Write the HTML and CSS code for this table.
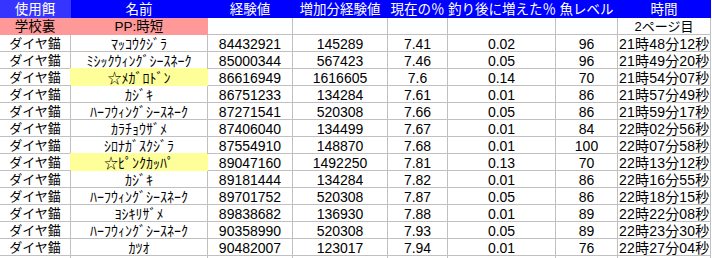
FILE: index.html
```html
<!DOCTYPE html>
<html lang="ja">
<head>
<meta charset="utf-8">
<title>釣りログ</title>
<link rel="stylesheet" href="styles.css">
</head>
<body>
<div class="sheet">
  <div class="c h first">使用餌</div>
  <div class="c h">名前</div>
  <div class="c h">経験値</div>
  <div class="c h">増加分経験値</div>
  <div class="c h">現在の％</div>
  <div class="c h">釣り後に増えた％</div>
  <div class="c h">魚レベル</div>
  <div class="c h">時間</div>

  <div class="c jp pink first-pink">学校裏</div>
  <div class="c jp pink">PP:時短</div>
  <div class="c"></div>
  <div class="c"></div>
  <div class="c"></div>
  <div class="c"></div>
  <div class="c"></div>
  <div class="c jp">2ページ目</div>

  <div class="c jp">ダイヤ錨</div><div class="c kana">ﾏｯｺｳｸｼﾞﾗ</div><div class="c">84432921</div><div class="c">145289</div><div class="c">7.41</div><div class="c">0.02</div><div class="c">96</div><div class="c t">21時48分12秒</div>
  <div class="c jp">ダイヤ錨</div><div class="c kana">ﾐｼｯｸｳｨﾝｸﾞｼｰｽﾈｰｸ</div><div class="c">85000344</div><div class="c">567423</div><div class="c">7.46</div><div class="c">0.05</div><div class="c">96</div><div class="c t">21時49分20秒</div>
  <div class="c jp">ダイヤ錨</div><div class="c kana yellow">☆ﾒｶﾞﾛﾄﾞﾝ</div><div class="c">86616949</div><div class="c">1616605</div><div class="c">7.6</div><div class="c">0.14</div><div class="c">70</div><div class="c t">21時54分07秒</div>
  <div class="c jp">ダイヤ錨</div><div class="c kana">ｶｼﾞｷ</div><div class="c">86751233</div><div class="c">134284</div><div class="c">7.61</div><div class="c">0.01</div><div class="c">86</div><div class="c t">21時57分49秒</div>
  <div class="c jp">ダイヤ錨</div><div class="c kana">ﾊｰﾌｳｨﾝｸﾞｼｰｽﾈｰｸ</div><div class="c">87271541</div><div class="c">520308</div><div class="c">7.66</div><div class="c">0.05</div><div class="c">86</div><div class="c t">21時59分17秒</div>
  <div class="c jp">ダイヤ錨</div><div class="c kana">ｶﾗﾁｮｳｻﾞﾒ</div><div class="c">87406040</div><div class="c">134499</div><div class="c">7.67</div><div class="c">0.01</div><div class="c">84</div><div class="c t">22時02分56秒</div>
  <div class="c jp">ダイヤ錨</div><div class="c kana">ｼﾛﾅｶﾞｽｸｼﾞﾗ</div><div class="c">87554910</div><div class="c">148870</div><div class="c">7.68</div><div class="c">0.01</div><div class="c">100</div><div class="c t">22時07分58秒</div>
  <div class="c jp">ダイヤ錨</div><div class="c kana yellow">☆ﾋﾟﾝｸｶｯﾊﾟ</div><div class="c">89047160</div><div class="c">1492250</div><div class="c">7.81</div><div class="c">0.13</div><div class="c">70</div><div class="c t">22時13分12秒</div>
  <div class="c jp">ダイヤ錨</div><div class="c kana">ｶｼﾞｷ</div><div class="c">89181444</div><div class="c">134284</div><div class="c">7.82</div><div class="c">0.01</div><div class="c">86</div><div class="c t">22時16分55秒</div>
  <div class="c jp">ダイヤ錨</div><div class="c kana">ﾊｰﾌｳｨﾝｸﾞｼｰｽﾈｰｸ</div><div class="c">89701752</div><div class="c">520308</div><div class="c">7.87</div><div class="c">0.05</div><div class="c">86</div><div class="c t">22時18分15秒</div>
  <div class="c jp">ダイヤ錨</div><div class="c kana">ﾖｼｷﾘｻﾞﾒ</div><div class="c">89838682</div><div class="c">136930</div><div class="c">7.88</div><div class="c">0.01</div><div class="c">89</div><div class="c t">22時22分08秒</div>
  <div class="c jp">ダイヤ錨</div><div class="c kana">ﾊｰﾌｳｨﾝｸﾞｼｰｽﾈｰｸ</div><div class="c">90358990</div><div class="c">520308</div><div class="c">7.93</div><div class="c">0.05</div><div class="c">89</div><div class="c t">22時23分30秒</div>
  <div class="c jp">ダイヤ錨</div><div class="c kana">ｶﾂｵ</div><div class="c">90482007</div><div class="c">123017</div><div class="c">7.94</div><div class="c">0.01</div><div class="c">76</div><div class="c t">22時27分04秒</div>
  <div class="c"></div><div class="c"></div><div class="c"></div><div class="c"></div><div class="c"></div><div class="c"></div><div class="c"></div><div class="c"></div>
</div>
</body>
</html>
```

FILE: styles.css
```css
html, body {
  margin: 0;
  padding: 0;
  background: #ffffff;
  overflow: hidden;
}

body {
  font-family: "Liberation Sans", "Noto Sans CJK JP", sans-serif;
  font-size: 14px;
  color: #000000;
}

.sheet {
  display: grid;
  grid-template-columns: 71px 137px 85px 95px 60px 108px 62px 93px;
  grid-template-rows: 18px;
  grid-auto-rows: 17px;
  width: 711px;
}

.c {
  box-sizing: border-box;
  border-right: 1px solid #c0c0c0;
  border-bottom: 1px solid #c0c0c0;
  line-height: 16px;
  padding-top: 1px;
  text-align: center;
  white-space: nowrap;
  background: #ffffff;
}

.h {
  background: #0000ff;
  border-color: #0000ff;
  color: #ffffff;
  font-size: 13.5px;
  padding-top: 2px;
}

.h.first {
  background: #3535ff;
  border-color: #3535ff;
}

.jp {
  font-size: 13px;
}

.pink {
  background: #ff9999;
  border-color: #ff9999;
  font-size: 13.5px;
}

.first-pink {
  border-right-color: #ff9999;
}

.kana {
  font-size: 14px;
}

.yellow {
  background: #ffff99;
  border-color: #ffff99;
  box-shadow: -1px -1px 0 0 #ffff99;
}

.t {
  font-size: 14px;
  overflow: hidden;
  text-align: left;
  padding-left: 1px;
  letter-spacing: 0.2px;
}
```
